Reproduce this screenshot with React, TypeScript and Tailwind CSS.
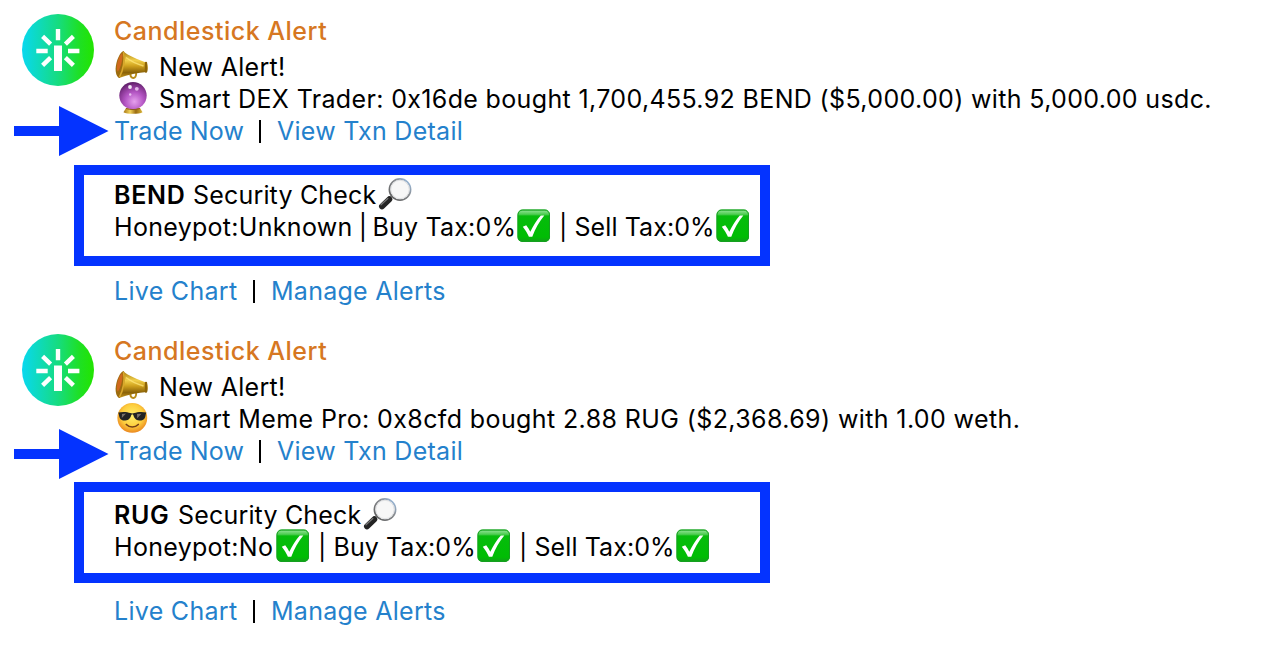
import { type ReactNode } from "react";
import clsx from "clsx";

interface Alert {
  id: string;
  icon: ReactNode;
  summary: string;
  summaryClass: string;
  token: string;
  tokenClass: string;
  boxClass: string;
  arrowClass: string;
  linksClass: string;
  checks: ReactNode;
}

function Logo() {
  return (
    <svg className="block h-[72px] w-[72px]" viewBox="0 0 72 72" aria-hidden="true">
      <defs>
        <linearGradient id="logo-fill" x1="0" y1="0" x2="1" y2="0">
          <stop offset="0" stopColor="#08d8f0" />
          <stop offset="0.5" stopColor="#16dc80" />
          <stop offset="0.8" stopColor="#1ee024" />
          <stop offset="1" stopColor="#22e400" />
        </linearGradient>
      </defs>
      <circle cx="36" cy="36" r="36" fill="url(#logo-fill)" />
      <g stroke="#fff" strokeWidth="4.4">
        <path d="M36 15v11.3M14.3 37h11.4M46 37h11.4" />
        <path d="M20.6 22.4l8 7.8M51.4 22.4l-8 7.8M20.6 51.4l8-7.8M51.4 51.4l-8-7.8" />
      </g>
      <path d="M32 31.5h8V57h-8z" fill="#fff" />
    </svg>
  );
}

function Megaphone() {
  return (
    <svg className="ml-px block h-8 w-[34px] shrink-0 overflow-visible" viewBox="0 0 34 32" aria-hidden="true">
      <defs>
        <linearGradient id="horn" x1="0" y1="0" x2="0" y2="1">
          <stop offset="0" stopColor="#a5780c" />
          <stop offset="0.35" stopColor="#f0cf4a" />
          <stop offset="0.55" stopColor="#d0a21e" />
          <stop offset="0.8" stopColor="#8a6208" />
          <stop offset="1" stopColor="#c79a1c" />
        </linearGradient>
      </defs>
      <path d="M15.5 22.5c-.8 6 6.4 6 5.6-.5" fill="none" stroke="#b88c18" strokeWidth="1.9" />
      <path
        d="M8 0C13 4.500 24 9.300 31.300 11.400c1.800 1.600 2 7.200.6 9.600C23 21.600 13 23.500 4 27z"
        fill="url(#horn)"
      />
      <path d="M8.500 0C5 1 .8 10 .6 18c0 4.500 1.400 8.500 3.800 9C8 24 11 8 8.500 0z" fill="#9c6c0e" />
      <path d="M7.300 2C4.500 4 2 10.500 1.800 17c0 2 .5 3.500 1.200 3.500C5.500 17 8.300 8 7.300 2z" fill="#d0681e" />
      <path d="M8.500 1c1.800 8-.6 19-4 25" fill="none" stroke="#d9a82c" strokeWidth="1.500" />
      <path d="M31 12v8.600" stroke="#8e6509" strokeWidth="2.400" strokeLinecap="round" />
      <path d="M11 6.500c5 4 11 6.500 17.500 8.500" fill="none" stroke="#ffe77c" strokeWidth="1.400" opacity=".75" />
    </svg>
  );
}

function CrystalBall() {
  return (
    <svg className="ml-px block h-8 w-[34px] shrink-0 overflow-visible" viewBox="0 0 34 32" aria-hidden="true">
      <defs>
        <radialGradient id="orb" cx="0.55" cy="0.72" r="0.68">
          <stop offset="0" stopColor="#e6a0ee" />
          <stop offset="0.5" stopColor="#b456c4" />
          <stop offset="0.85" stopColor="#84348f" />
          <stop offset="1" stopColor="#65236f" />
        </radialGradient>
        <linearGradient id="orb-base" x1="0" x2="1">
          <stop offset="0" stopColor="#a57514" />
          <stop offset="0.35" stopColor="#f3d45c" />
          <stop offset="0.65" stopColor="#9a6b10" />
          <stop offset="1" stopColor="#dcb83c" />
        </linearGradient>
      </defs>
      <path d="M11 25h14l2.500 4.200c-3 2-16 2-19 0z" fill="url(#orb-base)" />
      <circle cx="18" cy="12.600" r="13.700" fill="url(#orb)" />
      <circle cx="15" cy="4" r="1.900" fill="#fff" opacity=".9" />
      <circle cx="21.800" cy="5.800" r="1.900" fill="#f6d6fa" opacity=".8" />
      <circle cx="15.200" cy="11.500" r="1.200" fill="#f6d6fa" opacity=".8" />
      <path d="M11 25.500c4 1.400 10 1.400 14 0" fill="none" stroke="#8a5a22" />
    </svg>
  );
}

function Sunglasses() {
  return (
    <svg className="ml-px block h-8 w-[34px] shrink-0" viewBox="0 0 34 32" aria-hidden="true">
      <defs>
        <radialGradient id="face" cx="0.5" cy="0.42" r="0.6">
          <stop offset="0" stopColor="#fff06c" />
          <stop offset="0.6" stopColor="#fdce3e" />
          <stop offset="1" stopColor="#e9811c" />
        </radialGradient>
      </defs>
      <circle cx="17.300" cy="14.900" r="14.900" fill="url(#face)" />
      <path
        d="M3.300 9.500c4-1 9-.8 12 .6 1.300.5 2.700.5 4 0 3-1.400 8-1.600 12-.6l-.6 2.300c-.6 4.900-2.800 5.900-6.400 5.700-3.700-.2-5-2.200-6-5.400-.4-1.200-1.600-1.200-2 0-1 3.200-2.300 5.200-6 5.400-3.600.2-5.800-.8-6.400-5.700z"
        fill="#222324"
      />
      <path d="M7 11l4-.4-4.200 4.500zM22 11l4.500-.2-4.300 4.500z" fill="#77706a" />
      <path d="M11.300 21.500c3.300 3.300 8.700 3.300 12 0" fill="none" stroke="#764017" strokeWidth="1.700" strokeLinecap="round" />
    </svg>
  );
}

function Magnifier() {
  return (
    <svg className="-mt-[3px] ml-px block h-[34px] w-[34px] shrink-0" viewBox="0 0 34 34" aria-hidden="true">
      <defs>
        <linearGradient id="rim" x1="0" y1="1" x2="1" y2="0">
          <stop offset="0" stopColor="#585858" />
          <stop offset="0.6" stopColor="#8a8d91" />
          <stop offset="1" stopColor="#9cc4ee" />
        </linearGradient>
      </defs>
      <path d="M14.500 18.500l-4 4.500" stroke="#a8a8a8" strokeWidth="2.500" />
      <path d="M11.300 22.300l-7.300 7" stroke="#242424" strokeWidth="6" strokeLinecap="round" />
      <path d="M9.800 21.500l-6.800 6.300" stroke="#777" strokeWidth="1.300" strokeLinecap="round" />
      <circle cx="22" cy="12.500" r="10.600" fill="#f7f7f7" stroke="url(#rim)" strokeWidth="1.700" />
      <circle cx="22" cy="12.500" r="9.200" fill="none" stroke="#d9dadd" strokeWidth=".8" />
    </svg>
  );
}

function Check() {
  return (
    <svg className="-mt-[3px] block h-[34px] w-[34px] shrink-0" viewBox="0 0 34 34" aria-hidden="true">
      <defs>
        <linearGradient id="check-fill" x1="0" y1="0" x2="0" y2="1">
          <stop offset="0" stopColor="#46c24c" />
          <stop offset="0.06" stopColor="#7cdc80" />
          <stop offset="0.15" stopColor="#4ccc50" />
          <stop offset="0.2" stopColor="#06bc0c" />
          <stop offset="0.85" stopColor="#00bd04" />
          <stop offset="1" stopColor="#159c1d" />
        </linearGradient>
      </defs>
      <rect x="0.500" y="0.500" width="32.500" height="32.500" rx="5" fill="url(#check-fill)" />
      <rect x="1" y="1" width="31.500" height="31.500" rx="4.700" fill="none" stroke="#16a020" strokeWidth="1" />
      <path
        d="M5.800 17.800l3.400-1.500c1.600 1.900 2.900 4 4.100 6.500C16.300 16.500 19.800 11 23.800 6.500h3.500C22.300 12.500 18.300 19.500 15.300 27.800h-3.400c-1.700-3.600-3.500-6.800-6.100-10z"
        fill="#fff"
      />
    </svg>
  );
}

function Arrow({ className }: { className: string }) {
  return (
    <svg className={clsx("absolute left-[14px] h-[50px] w-[95px]", className)} viewBox="0 0 95 50" aria-hidden="true">
      <path d="M0 20h45V0l49.500 25L45 50V30H0z" fill="#0433ff" />
    </svg>
  );
}

function Row({ children, className }: { children: ReactNode; className?: string }) {
  return <div className={clsx("flex h-8 items-center whitespace-pre", className)}>{children}</div>;
}

function Link({ children, className = "tracking-[0.27px]" }: { children: string; className?: string }) {
  return (
    <a href="#" className={clsx("text-[#2481cc]", className)}>
      {children}
    </a>
  );
}

function Divider({ className }: { className: string }) {
  return <span className={clsx("h-[23px] w-[2px] bg-black", className)} />;
}

const alerts: Alert[] = [
  {
    id: "bend",
    icon: <CrystalBall />,
    summary: "Smart DEX Trader: 0x16de bought 1,700,455.92 BEND ($5,000.00) with 5,000.00 usdc.",
    summaryClass: "tracking-[0.35px]",
    token: "BEND",
    tokenClass: "w-[79px] tracking-[0.7px]",
    boxClass: "mt-[18px] pt-1",
    arrowClass: "top-[106px]",
    linksClass: "mt-[9px]",
    checks: (
      <>
        <span className="w-[403px]">
          Honeypot:Unknown<span className="tracking-[-0.8px]"> | </span>
          <span className="tracking-[0.18px]">Buy Tax:0%</span>
        </span>
        <Check />
        <span className="ml-2 w-[157px] tracking-[0.08px]">| Sell Tax:0%</span>
        <Check />
      </>
    ),
  },
  {
    id: "rug",
    icon: <Sunglasses />,
    summary: "Smart Meme Pro: 0x8cfd bought 2.88 RUG ($2,368.69) with 1.00 weth.",
    summaryClass: "tracking-[0.39px]",
    token: "RUG",
    tokenClass: "w-[64px] tracking-[0.7px]",
    boxClass: "mt-[15px] pt-[7px]",
    arrowClass: "top-[109px]",
    linksClass: "mt-[12px]",
    checks: (
      <>
        <span className="w-[162px]">Honeypot:No</span>
        <Check />
        <span className="ml-2 w-[159px] tracking-[0.06px]">| Buy Tax:0%</span>
        <Check />
        <span className="ml-2 w-[157px] tracking-[0.08px]">| Sell Tax:0%</span>
        <Check />
      </>
    ),
  },
];

function AlertMessage({ alert }: { alert: Alert }) {
  return (
    <article className="relative flex h-80 pl-[22px]">
      <div className="w-[92px] shrink-0 pt-[14px]">
        <Logo />
      </div>
      <Arrow className={alert.arrowClass} />
      <div className="flex flex-col pt-[15px]">
        <h2 className="mb-1 h-8 whitespace-pre font-medium tracking-[0.5px] text-[#d67722]">Candlestick Alert</h2>
        <Row>
          <Megaphone />
          <span className="ml-[10px]">New Alert!</span>
        </Row>
        <Row>
          {alert.icon}
          <span className={clsx("ml-[10px]", alert.summaryClass)}>{alert.summary}</span>
        </Row>
        <Row>
          <Link className="w-[145px] tracking-[0.12px]">Trade Now</Link>
          <Divider className="mr-[16px]" />
          <Link>View Txn Detail</Link>
        </Row>
        <section
          className={clsx("-ml-10 h-[101px] w-[696px] border-10 border-[#0433ff] pl-[30px]", alert.boxClass)}
        >
          <Row>
            <strong className={clsx("font-semibold", alert.tokenClass)}>{alert.token}</strong>
            <span className="w-[184px] tracking-[0.18px]">Security Check</span>
            <Magnifier />
          </Row>
          <Row>{alert.checks}</Row>
        </section>
        <Row className={alert.linksClass}>
          <Link className="w-[139px] tracking-[0.3px]">Live Chart</Link>
          <Divider className="mr-[16px]" />
          <Link>Manage Alerts</Link>
        </Row>
      </div>
    </article>
  );
}

export default function App() {
  return (
    <main className="h-[646px] w-[1276px] overflow-hidden bg-white font-['Inter',sans-serif] text-[25px] leading-8 tracking-[0.3px] text-black">
      {alerts.map((alert) => (
        <AlertMessage key={alert.id} alert={alert} />
      ))}
    </main>
  );
}
